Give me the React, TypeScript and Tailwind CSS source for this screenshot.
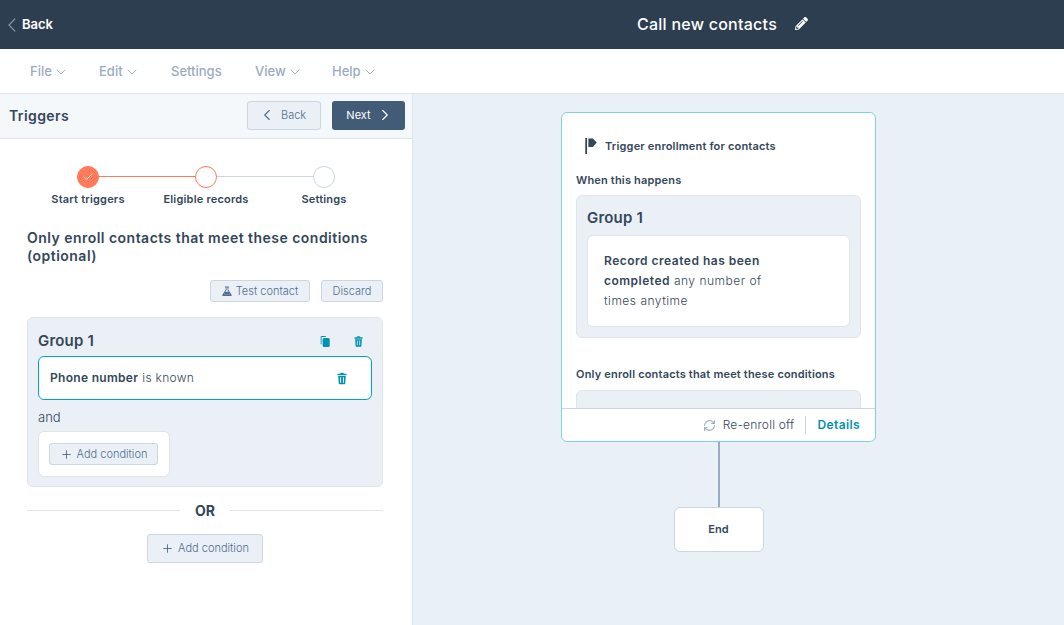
import { ChevronDown, ChevronLeft, ChevronRight, Check, Plus, RefreshCw } from "lucide-react";
import { FaPencilAlt } from "react-icons/fa";

const font = "font-['Inter','Noto_Sans',sans-serif]";

const menuItems = [
  { label: "File", caret: true, width: "w-[69px]" },
  { label: "Edit", caret: true, width: "w-[72px]" },
  { label: "Settings", caret: false, width: "w-[84px]" },
  { label: "View", caret: true, width: "w-[77px]" },
  { label: "Help", caret: true, width: "w-[60px]" },
];

// Teal trash can used on the group and condition rows
function TrashIcon({ className }: { className?: string }) {
  return (
    <svg viewBox="0 0 12 14" className={className} fill="currentColor">
      <rect x="4" y="0" width="4" height="1.6" rx="0.5" />
      <rect x="0.5" y="1.4" width="11" height="1.8" rx="0.5" />
      <path d="M1.5 4h9l-.6 9a1 1 0 0 1-1 1H3.100a1 1 0 0 1-1-1L1.500 4zm2.300 1.500v6.500h1.100V5.500H3.800zm3.300 0v6.500h1.100V5.500H7.100z" fillRule="evenodd" />
    </svg>
  );
}

function CopyIcon({ className }: { className?: string }) {
  return (
    <svg viewBox="0 0 12 14" className={className} fill="currentColor">
      <path d="M0.500 1.500A1.500 1.500 0 0 1 2 0h5v1.200H2.400a.8.8 0 0 0-.8.8v8.500H0.500V1.500z" />
      <rect x="3" y="2.500" width="9" height="11.500" rx="2" />
    </svg>
  );
}

function FlaskIcon({ className }: { className?: string }) {
  return (
    <svg viewBox="0 0 12 12" className={className} fill="currentColor">
      <rect x="3.500" y="0.500" width="5" height="1.200" rx="0.400" />
      <path d="M4.400 1.500h1v3.200L2.200 10h7.600L6.600 4.700V1.500h1v2.900l3.900 6.200a.9.900 0 0 1-.8 1.400H1.300a.9.900 0 0 1-.8-1.400l3.900-6.200V1.500z" />
      <path d="M3.800 7h4.400l1.600 3H2.200z" />
    </svg>
  );
}

function FlagIcon({ className }: { className?: string }) {
  return (
    <svg viewBox="0 0 14 18" className={className} fill="currentColor">
      <rect x="0" y="0" width="2" height="18" />
      <path d="M3.500 0.500h5L13 5 8.500 10h-5z" />
    </svg>
  );
}

function ActionButton({ children, className }: { children: React.ReactNode; className?: string }) {
  return (
    <button className={`flex items-center justify-center rounded-[3px] border border-[#cbd6e2] bg-[#eaf0f6] font-light text-[#506e91] ${className ?? ""}`}>
      {children}
    </button>
  );
}

function Step({ label, state, line }: { label: string; state: "done" | "active" | "todo"; line?: "orange" | "gray" }) {
  return (
    <div className="relative flex w-[119px] flex-col items-center">
      <div
        className={`z-10 flex h-[22px] w-[22px] items-center justify-center rounded-full border ${
          state === "done"
            ? "border-[#ff7a59] bg-[#ff7a59]"
            : state === "active"
            ? "border-[#ff7a59] bg-white"
            : "border-[#cbd6e2] bg-white"
        }`}
      >
        {state === "done" && <Check className="h-3 w-3 text-white" strokeWidth={2} />}
      </div>
      {line && (
        <div className={`absolute left-[59px] top-[10px] h-px w-[119px] ${line === "orange" ? "bg-[#ff7a59]" : "bg-[#cbd6e2]"}`} />
      )}
      <span className="mt-[4px] text-[11px] leading-[14px] font-semibold tracking-[0.2px] text-[#33475b]">{label}</span>
    </div>
  );
}

export default function App() {
  return (
    <div className={`${font} flex h-[625px] w-[1064px] flex-col overflow-hidden bg-white text-[#33475b]`}>
      {/* Top bar */}
      <header className="relative flex h-[49px] shrink-0 items-center bg-[#2d3e50] text-white">
        <div className="flex items-center pl-[8px]">
          <svg viewBox="0 0 8 14" className="h-[14px] w-[8px] text-[#7c98b6]" fill="none" stroke="currentColor" strokeWidth="1.3">
            <path d="M7.200 0.600 1 7l6.200 6.400" />
          </svg>
          <span className="ml-[6px] text-[13px] font-semibold">Back</span>
        </div>
        <div className="ml-[584px] flex items-center pb-[2px]">
          <span className="text-[16px] font-medium tracking-[0.25px]">Call new contacts</span>
          <FaPencilAlt className="ml-[18px] h-[13px] w-[13px]" />
        </div>
      </header>

      {/* Menu bar */}
      <nav className="flex h-[45px] shrink-0 items-center border-b border-[#dfe3eb] pl-[30px] pt-[1px]">
        {menuItems.map((item) => (
          <div key={item.label} className={`flex items-center ${item.width} text-[13px] font-medium text-[#99acc2]`}>
            {item.label}
            {item.caret && <ChevronDown className="ml-[1px] h-[16px] w-[16px]" strokeWidth={1.3} />}
          </div>
        ))}
      </nav>

      <div className="flex min-h-0 flex-1">
        {/* Left panel */}
        <aside className="flex w-[413px] shrink-0 flex-col border-r border-[#dfe3eb] bg-white">
          <div className="flex h-[45px] shrink-0 items-center border-b border-[#dfe3eb] bg-[#f5f8fa] pb-[2px] pl-[9px] pr-[7px]">
            <h2 className="text-[14px] font-semibold tracking-[0.4px]">Triggers</h2>
            <ActionButton className="ml-auto h-[29px] w-[74px] !justify-start gap-[5px] pl-[10px] text-[11px] text-[#7c98b6]">
              <ChevronLeft className="h-[18px] w-[18px] text-[#506e91]" strokeWidth={1.5} />
              Back
            </ActionButton>
            <button className="ml-[11px] flex h-[29px] w-[73px] items-center justify-center gap-[5px] rounded-[3px] bg-[#425b76] pl-[3px] text-[11px] text-white">
              Next
              <ChevronRight className="h-[18px] w-[18px]" strokeWidth={1.5} />
            </button>
          </div>

          <div className="flex flex-col pl-[27px] pr-[29px]">
            <div className="mt-[27px] flex pl-[2px]">
              <Step label="Start triggers" state="done" line="orange" />
              <Step label="Eligible records" state="active" line="gray" />
              <Step label="Settings" state="todo" />
            </div>

            <h3 className="mt-[23px] text-[14px] leading-[18px] font-semibold tracking-[0.47px]">
              Only enroll contacts that meet these conditions (optional)
            </h3>

            <div className="mt-[15px] flex justify-end gap-[11px]">
              <ActionButton className="h-[22px] w-[100px] gap-[4px] text-[11px]">
                <FlaskIcon className="h-[10px] w-[10px]" />
                Test contact
              </ActionButton>
              <ActionButton className="h-[22px] w-[62px] text-[11px]">Discard</ActionButton>
            </div>

            <section className="mt-[15px] h-[170px] rounded-[6px] border border-[#dfe3eb] bg-[#eaf0f6] px-[10px] pt-[14px]">
              <div className="flex h-[18px] items-center">
                <span className="text-[15px] font-semibold tracking-[0.2px]">Group 1</span>
                <CopyIcon className="ml-auto h-[11px] w-[10px] text-[#0091ae]" />
                <TrashIcon className="ml-[24px] mr-[9px] h-[11px] w-[9px] text-[#0091ae]" />
              </div>
              <div className="mt-[6px] flex h-[44px] items-center rounded-[6px] border border-[#00a4bd] bg-white pl-[11px] pr-[24px] text-[12px] tracking-[0.3px]">
                <span className="font-semibold">Phone number</span>
                <span className="ml-[4px] font-light">is known</span>
                <TrashIcon className="ml-auto h-[13px] w-[10px] text-[#0091ae]" />
              </div>
              <div className="mt-[10px] text-[13px] leading-[15px] font-light">and</div>
              <div className="mt-[6px] flex h-[46px] w-[132px] items-center rounded-[6px] border border-[#dfe3eb] bg-white pl-[10px]">
                <ActionButton className="h-[22px] w-[109px] gap-[4px] text-[11px]">
                  <Plus className="h-[13px] w-[13px] text-[#425b76]" strokeWidth={1.5} />
                  Add condition
                </ActionButton>
              </div>
            </section>

            <div className="mt-[13px] flex items-center">
              <div className="h-px flex-1 bg-[#dfe3eb]" />
              <span className="w-[50px] text-center text-[14px] font-bold">OR</span>
              <div className="h-px flex-1 bg-[#dfe3eb]" />
            </div>

            <div className="mt-[13px] flex justify-center">
              <ActionButton className="h-[29px] w-[116px] gap-[4px] text-[11px]">
                <Plus className="h-[13px] w-[13px] text-[#425b76]" strokeWidth={1.5} />
                Add condition
              </ActionButton>
            </div>
          </div>
        </aside>

        {/* Workflow canvas */}
        <main className="flex min-w-0 flex-1 flex-col bg-[#e9f0f6] pl-[148px] pt-[18px]">
          <div className="flex w-[315px] flex-col items-center">
            <div className="flex h-[330px] w-full flex-col overflow-hidden rounded-[6px] border border-[#7fd1de] bg-white">
              <div className="min-h-0 flex-1 overflow-hidden px-[14px]">
                <div className="mt-[25px] flex items-center pl-[9px]">
                  <FlagIcon className="h-[16px] w-[13px] text-[#33475b]" />
                  <span className="ml-[7px] text-[11px] font-semibold tracking-[0.18px]">Trigger enrollment for contacts</span>
                </div>
                <div className="mt-[18px] text-[11px] leading-[14px] font-semibold tracking-[0.18px]">When this happens</div>
                <div className="mt-[8px] h-[143px] rounded-[6px] border border-[#dfe3eb] bg-[#eaf0f6] px-[10px] pt-[13px]">
                  <div className="text-[15px] leading-[18px] font-semibold tracking-[0.2px]">Group 1</div>
                  <div className="mt-[8px] h-[92px] rounded-[6px] border border-[#dfe3eb] bg-white px-[16px] pt-[15px] text-[12px] leading-[20px] tracking-[0.5px]">
                    <div className="font-semibold">Record created has been</div>
                    <div>
                      <span className="font-semibold">completed</span> <span className="font-light">any number of</span>
                    </div>
                    <div className="font-light">times anytime</div>
                  </div>
                </div>
                <div className="mt-[29px] text-[11px] leading-[14px] font-semibold tracking-[0.18px]">Only enroll contacts that meet these conditions</div>
                <div className="mt-[9px] h-[40px] rounded-[6px] border border-[#dfe3eb] bg-[#eaf0f6]" />
              </div>
              <div className="flex h-[33px] shrink-0 items-center justify-end border-t border-[#cbd6e2] pr-[15px]">
                <RefreshCw className="h-[13px] w-[13px] text-[#99acc2]" strokeWidth={2} />
                <span className="ml-[7px] text-[12px] font-light tracking-[0.2px]">Re-enroll off</span>
                <div className="mx-[11px] h-[18px] w-px bg-[#cbd6e2]" />
                <span className="text-[12px] font-semibold tracking-[0.4px] text-[#0091ae]">Details</span>
              </div>
            </div>
            <div className="h-[65px] w-[2px] bg-[#99acc2]" />
            <div className="flex h-[45px] w-[90px] items-center justify-center rounded-[6px] border border-[#cbd6e2] bg-white text-[11px] font-semibold">
              End
            </div>
          </div>
        </main>
      </div>
    </div>
  );
}
